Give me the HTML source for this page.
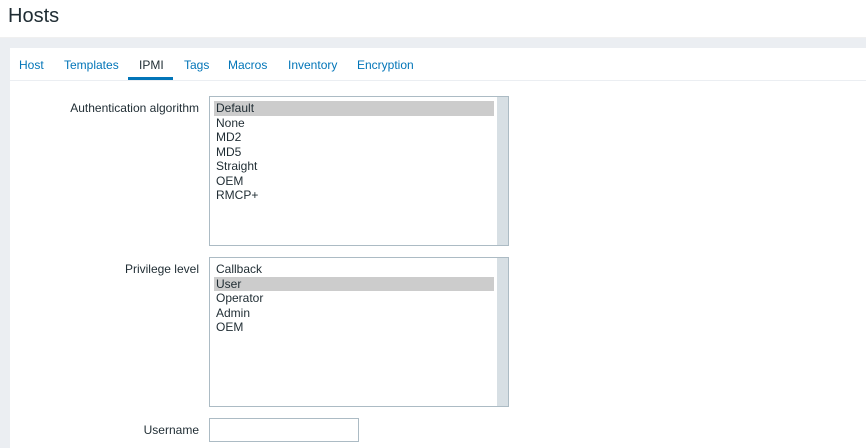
<!DOCTYPE html>
<html><head><style>
body{margin:0;width:866px;height:448px;overflow:hidden;background:#ebeef2;font-family:"Liberation Sans",Arial,sans-serif;font-size:12px;color:#1f2c33;position:relative}
.hdr{position:absolute;left:0;top:0;width:866px;height:37px;background:#fff;border-bottom:1px solid #f0f0f0}
.hdr h1{margin:0;position:absolute;left:8px;top:5px;font-size:20px;font-weight:normal;color:#1f2c33}
.panel{position:absolute;left:10px;top:48px;width:856px;height:400px;background:#fff}
.tabs{position:absolute;left:0;top:0;width:856px;height:32px;border-bottom:1px solid #ebeef2}
.tab{position:absolute;top:10px;color:#0275b8}
.tab.act{color:#1f2c33}
.ul{position:absolute;left:118px;top:29px;width:45px;height:3px;background:#0275b8}
.lbl{position:absolute;right:667px;color:#1f2c33;white-space:nowrap}
.lb{position:absolute;left:209px;width:298px;border:1px solid #acbbc4;background:#fff}
.sb{position:absolute;right:0;top:0;bottom:0;width:11px;background:#d7dfe4}
.it{position:absolute;left:6px;height:14.5px;line-height:14px;width:278px;padding-left:0}
.sel{background:#cccccc}
.inp{position:absolute;left:209px;top:418px;width:148px;height:22px;border:1px solid #acbbc4;background:#fff}
</style></head><body>
<div class="hdr"><h1>Hosts</h1></div>
<div class="panel">
<div class="tabs">
<span class="tab" style="left:9px">Host</span>
<span class="tab" style="left:54px">Templates</span>
<span class="tab act" style="left:129px">IPMI</span>
<span class="tab" style="left:174px">Tags</span>
<span class="tab" style="left:218px">Macros</span>
<span class="tab" style="left:278px">Inventory</span>
<span class="tab" style="left:347px">Encryption</span>
<div class="ul"></div>
</div>
</div>
<div class="lbl" style="top:101px">Authentication algorithm</div>
<div class="lb" style="top:96px;height:148px"><div class="sb"></div>
<div class="it sel" style="top:4px;left:4px;padding-left:2px">Default</div>
<div class="it" style="top:18.5px">None</div>
<div class="it" style="top:33px">MD2</div>
<div class="it" style="top:47.5px">MD5</div>
<div class="it" style="top:62px">Straight</div>
<div class="it" style="top:76.5px">OEM</div>
<div class="it" style="top:91px">RMCP+</div>
</div>
<div class="lbl" style="top:262px">Privilege level</div>
<div class="lb" style="top:257px;height:148px"><div class="sb"></div>
<div class="it" style="top:4px">Callback</div>
<div class="it sel" style="top:18.5px;left:4px;padding-left:2px">User</div>
<div class="it" style="top:33px">Operator</div>
<div class="it" style="top:47.5px">Admin</div>
<div class="it" style="top:62px">OEM</div>
</div>
<div class="lbl" style="top:423px">Username</div>
<div class="inp"></div>
</body></html>
